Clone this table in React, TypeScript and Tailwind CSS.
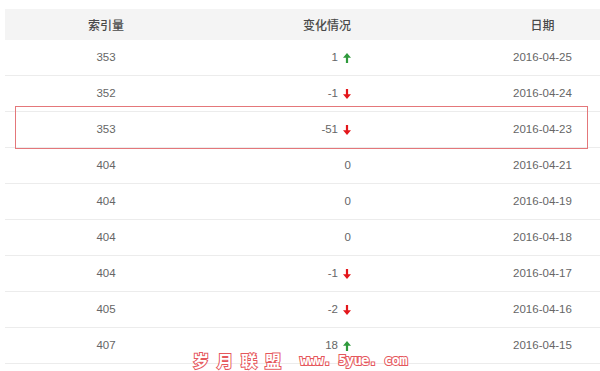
import React from "react";

type Row = { idx: number; change: number; dir: "up" | "down" | null; date: string };

const rows: Row[] = [
  { idx: 353, change: 1, dir: "up", date: "2016-04-25" },
  { idx: 352, change: -1, dir: "down", date: "2016-04-24" },
  { idx: 353, change: -51, dir: "down", date: "2016-04-23" },
  { idx: 404, change: 0, dir: null, date: "2016-04-21" },
  { idx: 404, change: 0, dir: null, date: "2016-04-19" },
  { idx: 404, change: 0, dir: null, date: "2016-04-18" },
  { idx: 404, change: -1, dir: "down", date: "2016-04-17" },
  { idx: 405, change: -2, dir: "down", date: "2016-04-16" },
  { idx: 407, change: 18, dir: "up", date: "2016-04-15" },
];

function Arrow({ dir }: { dir: "up" | "down" }) {
  if (dir === "up") {
    return (
      <svg width="8" height="10" viewBox="0 0 8 10" className="ml-[5px] shrink-0">
        <path d="M4 0 L8 4.8 L5.1 4.8 L5.1 10 L2.9 10 L2.9 4.8 L0 4.8 Z" fill="#2f9a3c" />
      </svg>
    );
  }
  return (
    <svg width="8" height="10" viewBox="0 0 8 10" className="ml-[5px] shrink-0">
      <path d="M4 10 L8 5.2 L5.1 5.2 L5.1 0 L2.9 0 L2.9 5.2 L0 5.2 Z" fill="#e3161b" />
    </svg>
  );
}

export default function App() {
  return (
    <div className="relative w-[600px] h-[371px] overflow-hidden bg-white font-['Liberation_Sans','Noto_Sans_CJK_SC',sans-serif]">
      <div className="pt-[9px] pl-[5px]">
        <div className="grid grid-cols-[202px_240px_1fr] h-[31px] items-center bg-[#f4f4f4] text-[12px] font-medium text-[#4a4a4a] font-['Noto_Sans_CJK_SC',sans-serif]">
          <div className="text-center">索引量</div>
          <div className="text-center">变化情况</div>
          <div className="text-center pl-[38px]">日期</div>
        </div>
        {rows.map((r, i) => (
          <div
            key={i}
            className="grid grid-cols-[202px_240px_1fr] h-[36px] items-center border-b border-[#ececec] text-[11.5px] text-[#666]"
          >
            <div className="text-center">{r.idx}</div>
            <div className="flex items-center justify-end pr-[96px]">
              <span>{r.change}</span>
              {r.dir && <Arrow dir={r.dir} />}
            </div>
            <div className="text-center pl-[38px]">{r.date}</div>
          </div>
        ))}
      </div>

      <div className="absolute left-[15px] top-[106px] w-[573px] h-[43px] border-[1.5px] border-[#e4777a]" />

      <div className="absolute left-[193px] top-[350px] flex items-center whitespace-nowrap text-white [-webkit-text-stroke:2px_#e5575c] [paint-order:stroke_fill]">
        <span className="font-['Noto_Sans_CJK_SC',sans-serif] font-bold text-[16px] leading-[20px] tracking-[8px]">岁月联盟</span>
        <span className="ml-[11px] font-['DejaVu_Sans_Mono',monospace] font-bold text-[14px] leading-[20px] tracking-[-0.8px]">www. 5yue. com</span>
      </div>
    </div>
  );
}
